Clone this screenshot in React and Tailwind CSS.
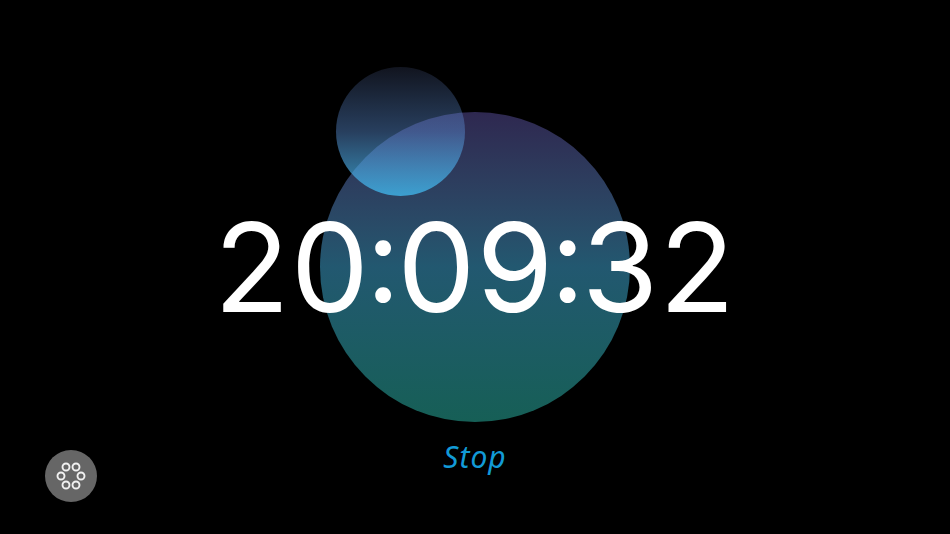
import React from "react";

function RingsIcon() {
    const rings = [[-5, -9], [5, -9], [-10, 0], [10, 0], [-5, 9], [5, 9]];
    return (
        <svg width="32" height="32" viewBox="-16 -16 32 32" fill="none" stroke="#f0f0f0" strokeWidth="1.9">
            {rings.map(([cx, cy], index) => (
                <circle key={index} cx={cx} cy={cy} r="3.5" />
            ))}
        </svg>
    );
}

function Colon() {
    return <span className="inline-block text-[119px] -translate-y-[10px] -mx-[4px]">:</span>;
}

export default function App() {
    return (
        <div className="relative flex flex-col items-center w-[950px] h-[534px] overflow-hidden bg-black">
            <div className="relative mt-[112px] w-[310px] h-[310px] rounded-full bg-gradient-to-b from-[#2e2850] via-[#225870] to-[#165f56]">
                <div className="absolute left-[16px] -top-[45px] w-[129px] h-[129px] rounded-full bg-gradient-to-b from-[#8fa8ff1f] via-[#5a8fd670] to-[#3fb2e6d4]" />
            </div>

            <div className="absolute inset-x-0 top-[192px] flex justify-center">
                <span className="text-white text-[124px] leading-[150px] font-[368] tracking-[1px] [font-family:Inter,sans-serif]">20<Colon />09<Colon />32</span>
            </div>

            <button className="mt-[20px] text-[#129ad6] text-[30px] leading-[30px] italic tracking-[1px] [font-family:'Noto_Sans',sans-serif]">Stop</button>

            <button className="absolute left-[45px] top-[450px] flex items-center justify-center w-[52px] h-[52px] rounded-full bg-[#666666]">
                <RingsIcon />
            </button>
        </div>
    );
}
